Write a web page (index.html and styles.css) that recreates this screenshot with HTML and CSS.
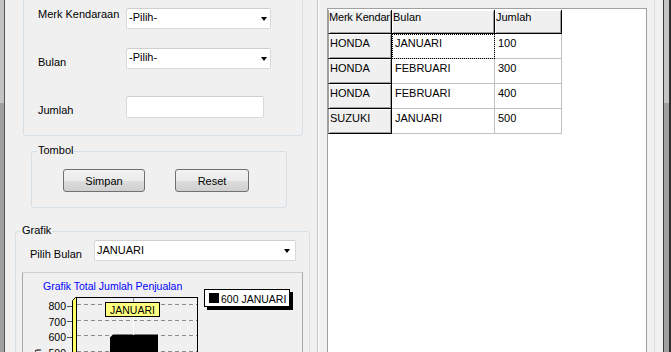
FILE: index.html
```html
<!DOCTYPE html>
<html lang="id">
<head>
    <meta charset="UTF-8">
    <title>Input Penjualan</title>
    <link rel="stylesheet" href="styles.css">
</head>
<body>
    <div class="window">
        <div class="edge edge-left"></div>

        <div class="left-col">
            <div class="group group-input">
                <div class="form-row">
                    <label class="field-label">Merk Kendaraan</label>
                    <div class="combo">-Pilih-<span class="arrow"></span></div>
                </div>
                <div class="form-row row-bulan">
                    <label class="field-label low">Bulan</label>
                    <div class="combo">-Pilih-<span class="arrow"></span></div>
                </div>
                <div class="form-row row-jumlah">
                    <label class="field-label low">Jumlah</label>
                    <div class="text-field"></div>
                </div>
            </div>

            <div class="group group-tombol">
                <span class="group-title">Tombol</span>
                <button class="btn btn-simpan">Simpan</button>
                <button class="btn btn-reset">Reset</button>
            </div>

            <div class="group group-grafik">
                <span class="group-title">Grafik</span>
                <div class="pilih-row">
                    <label class="pilih-label">Pilih Bulan</label>
                    <div class="combo combo-wide">JANUARI<span class="arrow"></span></div>
                </div>
                <div class="chart-panel">
                    <svg class="chart" width="279" height="88" viewBox="0 0 279 88">
                        <g transform="translate(-23 -273)" font-family="Liberation Sans, Arial, sans-serif" font-size="10.5">
                            <text x="43" y="290" fill="#0000ff">Grafik Total Jumlah Penjualan</text>
                            <text x="40.5" y="349" text-anchor="end" transform="rotate(-90 40.5 349)">Jumlah Penjualan</text>

                            <!-- dinding 3D -->
                            <polygon points="72.5,300.5 75.5,297.5 76.5,297.5 76.5,362 72.5,362" fill="#ffff66" stroke="#000"/>
                            <rect x="76.5" y="297.5" width="121" height="70" fill="#f0f0f0" stroke="#000"/>

                            <g stroke="#8c8c8c" stroke-dasharray="4 3">
                                <line x1="77" y1="304.5" x2="197" y2="304.5"/>
                                <line x1="77" y1="320.5" x2="197" y2="320.5"/>
                                <line x1="77" y1="335.5" x2="197" y2="335.5"/>
                                <line x1="77" y1="351.5" x2="197" y2="351.5"/>
                                <line x1="133.5" y1="298" x2="133.5" y2="362"/>
                            </g>
                            <g stroke="#555">
                                <line x1="67" y1="306.5" x2="72" y2="306.5"/>
                                <line x1="67" y1="321.5" x2="72" y2="321.5"/>
                                <line x1="67" y1="337.5" x2="72" y2="337.5"/>
                                <line x1="67" y1="352.5" x2="72" y2="352.5"/>
                            </g>
                            <g text-anchor="end">
                                <text x="66" y="310">800</text>
                                <text x="66" y="325.5">700</text>
                                <text x="66" y="341">600</text>
                                <text x="66" y="356.5">500</text>
                            </g>

                            <polygon points="110,337.5 113,334.5 158,334.5 158,362 110,362" fill="#000"/>
                            <line x1="133.5" y1="317" x2="133.5" y2="335" stroke="#fff"/>
                            <rect x="105.5" y="302.5" width="54" height="14" fill="#ffff80" stroke="#000"/>
                            <text x="132.5" y="313.5" text-anchor="middle">JANUARI</text>

                            <!-- legenda -->
                            <rect x="207" y="292" width="86" height="18" fill="#000"/>
                            <rect x="204.5" y="289.5" width="85" height="17" fill="#fff" stroke="#000"/>
                            <rect x="209" y="293" width="10" height="10" fill="#000"/>
                            <text x="221" y="302.5">600 JANUARI</text>
                        </g>
                    </svg>
                </div>
            </div>
        </div>

        <div class="right-col">
            <div class="table-panel">
                <div class="scroll-pane">
                    <table class="data-table">
                        <colgroup>
                            <col class="col-merk">
                            <col class="col-bulan">
                            <col class="col-jumlah">
                        </colgroup>
                        <tr>
                            <th class="first">Merk Kendar</th>
                            <th>Bulan</th>
                            <th>Jumlah</th>
                        </tr>
                        <tr>
                            <td class="row-head">HONDA</td>
                            <td class="focus">JANUARI</td>
                            <td>100</td>
                        </tr>
                        <tr>
                            <td class="row-head">HONDA</td>
                            <td>FEBRUARI</td>
                            <td>300</td>
                        </tr>
                        <tr>
                            <td class="row-head">HONDA</td>
                            <td>FEBRUARI</td>
                            <td>400</td>
                        </tr>
                        <tr>
                            <td class="row-head">SUZUKI</td>
                            <td>JANUARI</td>
                            <td>500</td>
                        </tr>
                    </table>
                </div>
            </div>
        </div>

        <div class="edge edge-right"></div>
    </div>
</body>
</html>
```

FILE: styles.css
```css
* {
    box-sizing: border-box;
}

body {
    margin: 0;
    background-color: #f0f0f0;
    font-family: "Liberation Sans", Arial, sans-serif;
    font-size: 11px;
    color: #000;
    overflow: hidden;
}

.window {
    display: flex;
    width: 671px;
    height: 352px;
    overflow: hidden;
}

.edge {
    flex: none;
    background: linear-gradient(#c4c4c4 0, #c4c4c4 103px, #a0a0a0 103px);
}

.edge-left {
    width: 5px;
    border-right: 1px solid #555;
}

.edge-right {
    width: 8px;
    border-left: 1px solid #3a3a3a;
    border-right: 2px solid #2e2e2e;
}

.left-col {
    flex: none;
    width: 312px;
}

.right-col {
    flex: none;
    width: 346px;
}

/* group box */
.group {
    position: relative;
    border: 1px solid #d5dfe5;
    border-radius: 3px;
}

.group-title {
    position: absolute;
    top: -8px;
    left: 5px;
    padding: 0 1px;
    line-height: 13px;
    background-color: #f0f0f0;
}

.group-input {
    width: 280px;
    margin: -20px 0 0 18px;
    padding: 27px 0 17px 14px;
}

.form-row {
    display: flex;
    align-items: flex-start;
}

.row-bulan {
    margin-top: 19px;
}

.row-jumlah {
    margin-top: 27px;
}

.field-label {
    width: 88px;
    line-height: 13px;
}

.field-label.low {
    padding-top: 8px;
}

.combo {
    position: relative;
    width: 145px;
    height: 21px;
    padding: 2px 0 0 2px;
    line-height: 13px;
    background-color: #fff;
    border: 1px solid #d9d9d9;
    border-top-color: #cfcfcf;
    border-radius: 2px;
}

.arrow {
    position: absolute;
    top: 8px;
    right: 3px;
    border-top: 4px solid #000;
    border-left: 3.5px solid transparent;
    border-right: 3.5px solid transparent;
}

.text-field {
    width: 138px;
    height: 22px;
    background-color: #fff;
    border: 1px solid #d9d9d9;
    border-top-color: #cfcfcf;
    border-radius: 2px;
}

.group-tombol {
    display: flex;
    align-items: flex-start;
    gap: 30px;
    width: 256px;
    height: 57px;
    margin: 15px 0 0 26px;
    padding: 17px 0 0 31px;
}

.btn {
    height: 23px;
    padding: 1px 0 0;
    font: inherit;
    line-height: 20px;
    color: #000;
    border: 1px solid #707070;
    border-radius: 3px;
    background: linear-gradient(#f2f2f2, #ebebeb 50%, #dddddd 50%, #cfcfcf);
}

.btn-simpan {
    width: 82px;
}

.btn-reset {
    width: 74px;
}

.group-grafik {
    width: 295px;
    height: 140px;
    margin: 23px 0 0 10px;
    padding: 8px 0 0 6px;
}

.pilih-row {
    display: flex;
    align-items: flex-start;
    padding-left: 8px;
}

.pilih-label {
    width: 64px;
    padding-top: 8px;
    line-height: 13px;
}

.combo-wide {
    width: 202px;
    padding-top: 3px;
}

.combo-wide .arrow {
    right: 5px;
}

.chart-panel {
    width: 281px;
    height: 90px;
    margin-top: 11px;
    border: 1px solid #a9a9a9;
    border-top-color: #d0d0d0;
}

.chart {
    display: block;
}

/* tabel */
.table-panel {
    width: 338px;
    height: 100%;
    padding: 8px 0 0 9px;
    border-left: 1px solid #c4c4c4;
    border-right: 1px solid #d5dfe5;
    box-shadow: inset 1px 0 0 #fff;
}

.scroll-pane {
    width: 320px;
    height: 360px;
    padding-top: 1px;
    background-color: #fff;
    border: 1px solid #a0a0a0;
}

.data-table {
    width: 234px;
    border-collapse: separate;
    border-spacing: 0;
    table-layout: fixed;
}

.col-merk {
    width: 64px;
}

.col-bulan {
    width: 103px;
}

.col-jumlah {
    width: 67px;
}

.data-table th {
    height: 24px;
    padding: 1px 0 0 1px;
    font-weight: normal;
    text-align: left;
    vertical-align: top;
    line-height: 13px;
    white-space: nowrap;
    overflow: hidden;
    background-color: #f0f0f0;
    border-right: 1px solid #000;
    border-bottom: 1px solid #000;
    box-shadow: inset 1px 1px 0 #fff, inset -1px -1px 0 #a0a0a0;
}

.data-table th.first {
    padding-left: 0;
    border-left: 1px solid #a0a0a0;
    letter-spacing: -0.2px;
}

.data-table td {
    height: 25px;
    padding: 3px 0 0 3px;
    vertical-align: top;
    line-height: 13px;
    white-space: nowrap;
    border-right: 1px solid #c0c0c0;
    border-bottom: 1px solid #c0c0c0;
}

.data-table td.row-head {
    padding-left: 1px;
    background-color: #f0f0f0;
    border-left: 1px solid #a0a0a0;
    border-right: 1px solid #000;
    border-bottom: 1px solid #000;
    box-shadow: inset 1px 1px 0 #fff, inset -1px -1px 0 #a0a0a0;
}

.focus {
    outline: 1px dotted #000;
    outline-offset: -1px;
}
```
